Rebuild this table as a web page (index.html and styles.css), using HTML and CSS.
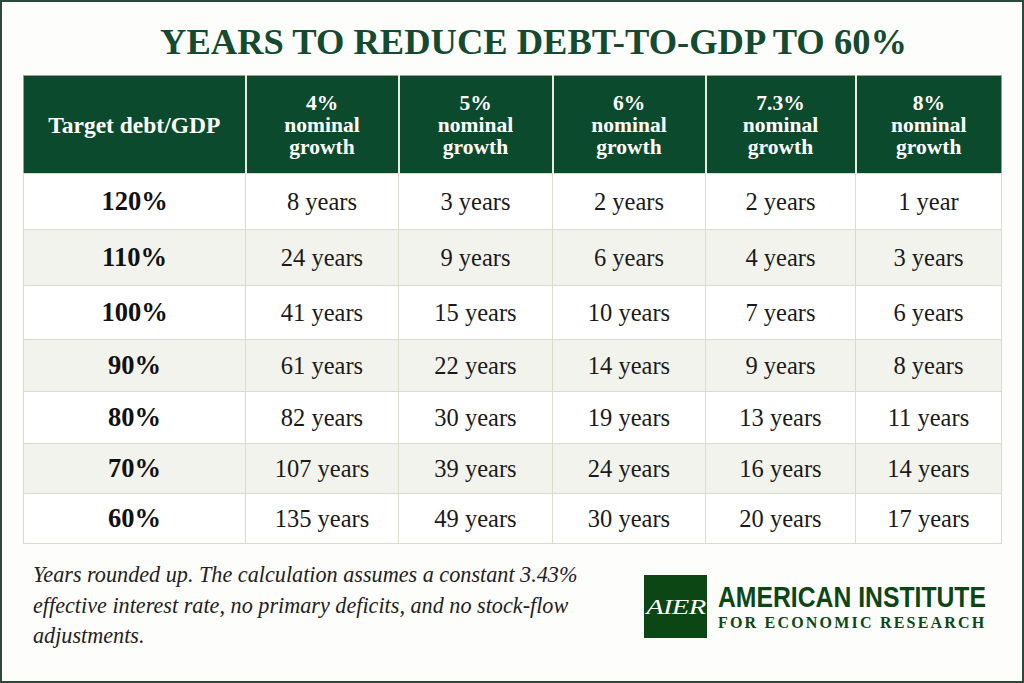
FILE: index.html
```html
<!DOCTYPE html>
<html>
<head>
<meta charset="utf-8">
<link rel="stylesheet" href="styles.css">
</head>
<body>
<div class="frame">
  <h1 class="title">YEARS TO REDUCE DEBT-TO-GDP TO 60%</h1>
  <table class="debt">
    <colgroup>
      <col class="c0"><col class="c1"><col class="c2"><col class="c3"><col class="c4"><col class="c5">
    </colgroup>
    <thead>
      <tr>
        <th class="first">Target debt/GDP</th>
        <th>4%<br>nominal<br>growth</th>
        <th>5%<br>nominal<br>growth</th>
        <th>6%<br>nominal<br>growth</th>
        <th>7.3%<br>nominal<br>growth</th>
        <th>8%<br>nominal<br>growth</th>
      </tr>
    </thead>
    <tbody>
      <tr class="r56"><td class="lab">120%</td><td>8 years</td><td>3 years</td><td>2 years</td><td>2 years</td><td>1 year</td></tr>
      <tr class="r56 alt"><td class="lab">110%</td><td>24 years</td><td>9 years</td><td>6 years</td><td>4 years</td><td>3 years</td></tr>
      <tr class="r54"><td class="lab">100%</td><td>41 years</td><td>15 years</td><td>10 years</td><td>7 years</td><td>6 years</td></tr>
      <tr class="r52 alt"><td class="lab">90%</td><td>61 years</td><td>22 years</td><td>14 years</td><td>9 years</td><td>8 years</td></tr>
      <tr class="r52"><td class="lab">80%</td><td>82 years</td><td>30 years</td><td>19 years</td><td>13 years</td><td>11 years</td></tr>
      <tr class="r50 alt"><td class="lab">70%</td><td>107 years</td><td>39 years</td><td>24 years</td><td>16 years</td><td>14 years</td></tr>
      <tr class="r50"><td class="lab">60%</td><td>135 years</td><td>49 years</td><td>30 years</td><td>20 years</td><td>17 years</td></tr>
    </tbody>
  </table>
  <div class="footer">
    <p class="note">Years rounded up. The calculation assumes a constant 3.43% effective interest rate, no primary deficits, and no stock-flow adjustments.</p>
    <div class="logo">
      <div class="mark"><span>AIER</span></div>
      <div class="words">
        <div class="big"><span>AMERICAN INSTITUTE</span></div>
        <div class="small">FOR ECONOMIC RESEARCH</div>
      </div>
    </div>
  </div>
</div>
</body>
</html>
```

FILE: styles.css
```css
html, body {
  margin: 0;
  padding: 0;
  background: #ffffff;
}
.frame {
  box-sizing: border-box;
  width: 1024px;
  height: 683px;
  border: 2px solid #2c4a3c;
  padding: 0 21px;
  background: #fdfdfb;
  font-family: "Liberation Serif", "DejaVu Serif", serif;
}
.title {
  margin: 0;
  padding: 19px 0 0 43px;
  height: 54px;
  line-height: 42px;
  font-size: 36.5px;
  font-weight: bold;
  color: #144a2f;
  text-align: center;
  white-space: nowrap;
}
.debt {
  width: 978px;
  table-layout: fixed;
  border-collapse: collapse;
  border: 1.5px solid #9aa67f;
  background: #ffffff;
}
.c0 { width: 222px; }
.c1 { width: 153px; }
.c2 { width: 154px; }
.c3 { width: 153px; }
.c4 { width: 150px; }
.c5 { width: 146px; }
.debt th {
  height: 97px;
  padding: 0;
  background: #0c4a2e;
  color: #ffffff;
  font-size: 21.5px;
  line-height: 22px;
  font-weight: bold;
  text-align: center;
  border-left: 2px solid #e8ece6;
}
.debt th.first {
  border-left: none;
  font-size: 23.5px;
}
.debt td {
  padding: 0;
  text-align: center;
  font-size: 24.5px;
  color: #1a1a1a;
  border: 1.5px solid #d9dccb;
}
.debt td.lab {
  font-weight: bold;
  font-size: 26.5px;
  color: #111111;
}
.debt tr.alt td {
  background: #f3f3ed;
}
.r56 td { height: 55px; }
.r54 td { height: 53px; }
.r52 td { height: 51px; }
.r50 td { height: 49px; }
.footer {
  display: flex;
  justify-content: space-between;
  align-items: flex-start;
}
.note {
  margin: 16px 0 0 10px;
  width: 592px;
  font-style: italic;
  font-size: 22.2px;
  line-height: 30.5px;
  color: #222222;
}
.logo {
  display: flex;
  align-items: center;
  gap: 11px;
  margin: 31px 15px 0 0;
}
.mark {
  width: 63px;
  height: 63px;
  background: #0b4614;
  display: flex;
  align-items: center;
  justify-content: center;
  overflow: hidden;
}
.mark span {
  font-family: "Liberation Serif", serif;
  font-style: italic;
  font-size: 22px;
  color: #ffffff;
  display: inline-block;
  transform: scaleX(1.3);
  letter-spacing: -0.5px;
}
.words {
  display: flex;
  flex-direction: column;
  width: 268px;
  color: #0b4614;
}
.big {
  font-family: "Liberation Sans Narrow", "Liberation Sans", sans-serif;
  font-weight: bold;
  font-size: 29px;
  line-height: 30px;
  white-space: nowrap;
}
.big span {
  display: inline-block;
  transform: scaleX(0.853);
  transform-origin: left center;
}
.small {
  font-family: "Liberation Serif", serif;
  font-weight: bold;
  font-size: 16px;
  line-height: 18px;
  letter-spacing: 2.2px;
  margin-top: 2px;
  white-space: nowrap;
}
```
